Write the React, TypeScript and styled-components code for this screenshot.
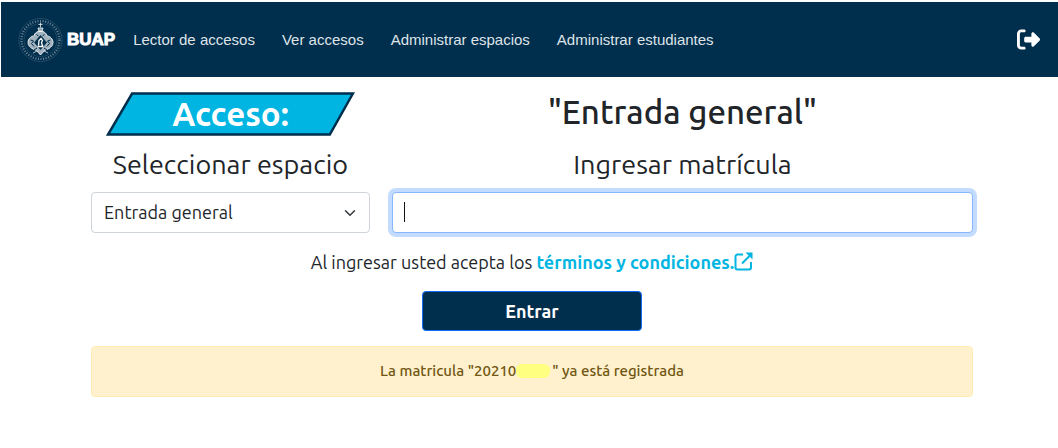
import React from "react";
import styled, { createGlobalStyle } from "styled-components";
import { FaRightFromBracket } from "react-icons/fa6";

const navy = "#002e4d";
const cyan = "#00b5e2";
const ink = "#212529";

const GlobalStyle = createGlobalStyle`
  *, *::before, *::after { box-sizing: border-box; }
  body {
    margin: 0;
    background: #fff;
    color: ${ink};
    font-family: Ubuntu, "Noto Sans", "Open Sans", sans-serif;
    font-size: 18px;
    line-height: 24px;
  }
`;

const Page = styled.div`
  padding-top: 2px;
`;

const Navbar = styled.nav`
  display: flex;
  align-items: center;
  height: 75px;
  padding: 0 18px 0 17px;
  margin-left: 1px;
  background: ${navy};
  font-family: "Liberation Sans", Arial, sans-serif;
`;

const Brand = styled.a`
  display: flex;
  align-items: center;
  gap: 4px;
  margin-right: 18px;
  color: #fff;
  text-decoration: none;
`;

const BrandName = styled.span`
  font-size: 17px;
  font-weight: 700;
  line-height: 24px;
  -webkit-text-stroke: 1px #fff;
`;

const NavList = styled.ul`
  display: flex;
  gap: 27px;
  flex: 1;
  margin: 0;
  padding: 0;
  list-style: none;
`;

const NavLink = styled.a`
  color: #dfe4e8;
  font-size: 15px;
  text-decoration: none;
  white-space: nowrap;
`;

const LogoutButton = styled.button`
  display: flex;
  padding: 0;
  border: 0;
  background: none;
  color: #fff;
  font-size: 23px;
`;

const Main = styled.main`
  padding: 15px 85px 0 91px;
`;

const Columns = styled.div`
  display: grid;
  grid-template-columns: minmax(0, 12fr) minmax(0, 25fr);
  column-gap: 22px;
`;

const Column = styled.div`
  display: flex;
  flex-direction: column;
`;

const Banner = styled.h1`
  display: grid;
  place-items: center;
  height: 44px;
  margin: 0 15px;
  color: #fff;
  font-size: 33px;
  font-weight: 700;
  line-height: 44px;

  > * { grid-area: 1 / 1; }
`;

const BannerShape = styled.svg`
  width: 100%;
  height: 44px;
`;

const BannerText = styled.span`
  z-index: 1;
`;

const Title = styled.h2`
  height: 44px;
  margin: 0;
  font-size: 33px;
  font-weight: 500;
  line-height: 40px;
  text-align: center;
`;

const FieldLabel = styled.label`
  margin: 11px 0;
  font-size: 27px;
  line-height: 34px;
  text-align: center;
  white-space: nowrap;
`;

const Field = styled.div`
  position: relative;
`;

const Select = styled.select`
  appearance: none;
  display: block;
  width: 100%;
  height: 41px;
  padding: 0 40px 1px 12px;
  border: 1px solid #ced4da;
  border-radius: 4px;
  background: #fff;
  color: ${ink};
  font: inherit;
`;

const Chevron = styled.svg`
  position: absolute;
  top: 15px;
  right: 14px;
  width: 12px;
  height: 12px;
  pointer-events: none;
`;

const TextInput = styled.input`
  display: block;
  width: 100%;
  height: 41px;
  padding: 0 12px;
  border: 1px solid #86b7fe;
  border-radius: 4px;
  outline: 0;
  box-shadow: 0 0 0 4px rgba(13, 110, 253, 0.25);
  caret-color: transparent;
  color: ${ink};
  font: inherit;
`;

const Caret = styled.span`
  position: absolute;
  top: 10px;
  left: 12px;
  width: 1px;
  height: 20px;
  background: #111;
  pointer-events: none;
`;

const Terms = styled.p`
  margin: 17px 0;
  text-align: center;
`;

const TermsLink = styled.a`
  color: ${cyan};
  font-weight: 700;
  text-decoration: none;
`;

const ExternalIcon = styled.svg`
  width: 19px;
  height: 19px;
  vertical-align: -2px;
`;

const Submit = styled.button`
  display: block;
  width: 25%;
  height: 40px;
  margin: 0 auto 15px;
  border: 1px solid #0d6efd;
  border-radius: 4px;
  background: ${navy};
  color: #fff;
  font: inherit;
  font-weight: 700;
`;

const Alert = styled.div`
  padding: 12px 16px 13px;
  border: 1px solid #ffecb5;
  border-radius: 4px;
  background: #fff1cd;
  color: #705611;
  font-size: 15px;
  font-weight: 500;
  text-align: center;
`;

const Redacted = styled.span`
  display: inline-block;
  width: 34px;
  height: 14px;
  margin-right: 2px;
  border-radius: 6px;
  background: #ffff80;
  vertical-align: -2px;
`;

function Crest() {
  return (
    <svg width="45" height="46" viewBox="0 0 45 46" fill="none" stroke="#fff" aria-hidden="true">
      <circle cx="22.500" cy="23" r="21.500" strokeWidth=".6" opacity=".4" strokeDasharray="1 .7" />
      <circle cx="22.500" cy="23" r="19" strokeWidth="2.200" opacity=".4" strokeDasharray="1.100 1.500" />
      <circle cx="22.500" cy="23" r="16.500" strokeWidth=".4" opacity=".3" />
      <path d="M20.500 7.500h4M22.500 5.500v5M20 11h5l-.8 3.500h-3.400z" fill="#fff" fillOpacity=".6" strokeWidth=".8" opacity=".9" />
      <path d="M22.500 14c-3 0-6 2-6.500 5-3 0-6 3-6 6.500 0 3 2 4.500 4 6l4.500 2 4 4.500 4-4.500 4.500-2c2-1.500 4-3 4-6 0-3.500-3-6.500-6-6.500-.5-3-3.500-5-6.500-5z" fill="#fff" fillOpacity=".7" strokeWidth="1" opacity=".9" />
      <path d="M22.500 18.500l6 7-6 7-6-7z" fill={navy} stroke={navy} strokeWidth=".8" />
      <path d="M20.500 28.500l.5-5 2-2 1.500 2-1 2 1 3.500M19.500 29.500h6" strokeWidth="1.300" />
      <path d="M12.500 23l3 1-2 2.500 2.500 3M32.500 23l-3 1 2 2.500-2.500 3M16 33l3-2M29 33l-3-2M18.500 17.500l2 1.500M26.500 17.500l-2 1.500" stroke={navy} strokeWidth="1" />
      <path d="M15 36l4-2M30 36l-4-2" strokeWidth="1" opacity=".7" />
    </svg>
  );
}

const links = ["Lector de accesos", "Ver accesos", "Administrar espacios", "Administrar estudiantes"];

export default function App() {
  return (
    <Page>
      <GlobalStyle />
      <Navbar>
        <Brand href="#">
          <Crest />
          <BrandName>BUAP</BrandName>
        </Brand>
        <NavList>
          {links.map((label) => (
            <li key={label}>
              <NavLink href="#">{label}</NavLink>
            </li>
          ))}
        </NavList>
        <LogoutButton type="button" aria-label="Salir">
          <FaRightFromBracket />
        </LogoutButton>
      </Navbar>
      <Main>
        <form onSubmit={(event) => event.preventDefault()}>
          <Columns>
            <Column>
              <Banner>
                <BannerShape viewBox="0 0 248 44" preserveAspectRatio="none" aria-hidden="true">
                  <path d="M26 1.500H246L223 42.500H2z" fill={cyan} stroke={navy} strokeWidth="2.500" />
                </BannerShape>
                <BannerText>Acceso:</BannerText>
              </Banner>
              <FieldLabel htmlFor="espacio">Seleccionar espacio</FieldLabel>
              <Field>
                <Select id="espacio" defaultValue="general">
                  <option value="general">Entrada general</option>
                </Select>
                <Chevron viewBox="0 0 16 16" fill="none" stroke="#343a40" strokeWidth="2" strokeLinecap="round" strokeLinejoin="round" aria-hidden="true">
                  <path d="m2 5 6 6 6-6" />
                </Chevron>
              </Field>
            </Column>
            <Column>
              <Title>"Entrada general"</Title>
              <FieldLabel htmlFor="matricula">Ingresar matrícula</FieldLabel>
              <Field>
                <TextInput id="matricula" type="text" autoFocus autoComplete="off" />
                <Caret />
              </Field>
            </Column>
          </Columns>
          <Terms>
            Al ingresar usted acepta los{" "}
            <TermsLink href="#">
              términos y condiciones.
              <ExternalIcon viewBox="0 0 19 19" fill="none" stroke="currentColor" strokeWidth="2" aria-hidden="true">
                <path d="M9 2.500H3.500A2 2 0 0 0 1.500 4.500V15.500A2 2 0 0 0 3.500 17.500H15A2 2 0 0 0 17 15.500V10" />
                <path d="M8 11.500 15.500 4" />
                <path d="M11.500.5H18.500V7.500z" fill="currentColor" stroke="none" />
              </ExternalIcon>
            </TermsLink>
          </Terms>
          <Submit type="submit">Entrar</Submit>
        </form>
        <Alert role="alert">
          La matricula "20210
          <Redacted />
          " ya está registrada
        </Alert>
      </Main>
    </Page>
  );
}
